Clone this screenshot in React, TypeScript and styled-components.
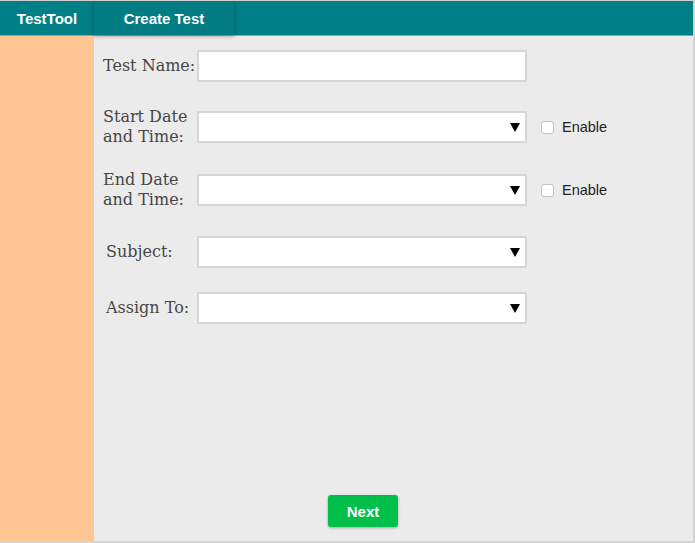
import React from "react";
import styled, { createGlobalStyle } from "styled-components";

const Global = createGlobalStyle`
  html, body { margin: 0; padding: 0; background: #ffffff; }
  body { font-family: "Liberation Sans", Arial, sans-serif; }
  * { box-sizing: border-box; }
`;

const Frame = styled.div`
  width: 695px;
  height: 543px;
  border-top: 1px solid #cfcfcf;
  border-right: 2px solid #d4d4d4;
  border-bottom: 2px solid #d4d4d4;
  display: flex;
  flex-direction: column;
  overflow: hidden;
`;

const TopBar = styled.header`
  height: 34px;
  background: #007f86;
  display: flex;
  align-items: stretch;
  box-shadow: 0 1px 0 #5fb9bd;
  position: relative;
  z-index: 2;
`;

const Tab = styled.div<{ $w: number; $active?: boolean }>`
  width: ${(p) => p.$w}px;
  display: flex;
  align-items: center;
  justify-content: center;
  color: #ffffff;
  font-weight: bold;
  font-size: 15px;
  background: ${(p) => (p.$active ? "#017c82" : "transparent")};
  box-shadow: ${(p) => (p.$active ? "0 1px 4px rgba(0,0,0,0.35)" : "none")};
`;

const Body = styled.div`
  flex: 1;
  display: flex;
  min-height: 0;
`;

const Sidebar = styled.aside`
  width: 94px;
  background: #ffc592;
`;

const Main = styled.main`
  flex: 1;
  background: #ebebeb;
  padding: 15px 0 0 9px;
  display: flex;
  flex-direction: column;
`;

const Row = styled.div<{ $mt: number }>`
  display: flex;
  align-items: center;
  margin-top: ${(p) => p.$mt}px;
`;

const Label = styled.label<{ $indent?: number }>`
  width: 94px;
  padding-left: ${(p) => p.$indent ?? 0}px;
  font-family: "DejaVu Serif", "Liberation Serif", serif;
  font-size: 16px;
  line-height: 20px;
  color: #464646;
  white-space: nowrap;
`;

const TextBox = styled.div`
  width: 330px;
  height: 32px;
  background: #ffffff;
  border: 2px solid #d6d6d6;
`;

const SelectBox = styled(TextBox)`
  position: relative;
`;

const Arrow = styled.span`
  position: absolute;
  right: 5px;
  top: 10px;
  width: 0;
  height: 0;
  border-left: 5px solid transparent;
  border-right: 5px solid transparent;
  border-top: 9px solid #000000;
`;

const CheckWrap = styled.div`
  display: flex;
  align-items: center;
  margin-left: 14px;
  gap: 8px;
  font-size: 14.5px;
  color: #222222;
`;

const Check = styled.span`
  width: 13px;
  height: 13px;
  border: 1px solid #c4c4c4;
  border-radius: 3px;
  background: #ffffff;
`;

const Footer = styled.div`
  margin-top: auto;
  margin-bottom: 14px;
  padding-left: 94px;
  width: 424px;
  display: flex;
  justify-content: center;
`;

const NextButton = styled.button`
  width: 70px;
  height: 32px;
  border: none;
  border-radius: 3px;
  background: #00bf4a;
  color: #ffffff;
  font-family: "Liberation Sans", Arial, sans-serif;
  font-weight: bold;
  font-size: 15px;
  box-shadow: 0 1px 3px rgba(0,0,0,0.3);
  margin-left: 2px;
`;

const Select = () => (
  <SelectBox>
    <Arrow />
  </SelectBox>
);

const Enable = () => (
  <CheckWrap>
    <Check />
    <span>Enable</span>
  </CheckWrap>
);

export default function App() {
  return (
    <>
      <Global />
      <Frame>
        <TopBar>
          <Tab $w={94}>TestTool</Tab>
          <Tab $w={140} $active>Create Test</Tab>
        </TopBar>
        <Body>
          <Sidebar />
          <Main>
            <Row $mt={0}>
              <Label>Test Name:</Label>
              <TextBox />
            </Row>
            <Row $mt={25}>
              <Label>Start Date<br />and Time:</Label>
              <Select />
              <Enable />
            </Row>
            <Row $mt={23}>
              <Label>End Date<br />and Time:</Label>
              <Select />
              <Enable />
            </Row>
            <Row $mt={26}>
              <Label $indent={3}>Subject:</Label>
              <Select />
            </Row>
            <Row $mt={24}>
              <Label $indent={3}>Assign To:</Label>
              <Select />
            </Row>
            <Footer>
              <NextButton>Next</NextButton>
            </Footer>
          </Main>
        </Body>
      </Frame>
    </>
  );
}
